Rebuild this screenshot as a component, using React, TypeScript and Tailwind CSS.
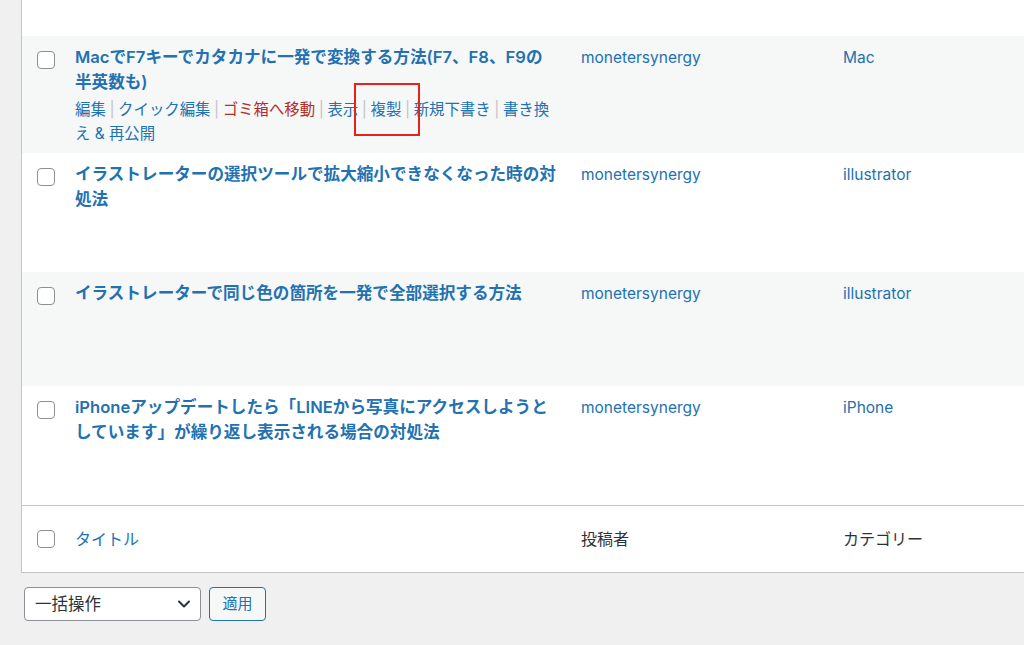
import React from 'react';

const font = "font-['Inter','Noto_Sans_CJK_JP',sans-serif]";

type Row = {
  title: string[];
  category: string;
  height: string;
  striped: boolean;
  actions?: boolean;
};

const rows: Row[] = [
  {
    title: ['MacでF7キーでカタカナに一発で変換する方法(F7、F8、F9の', '半英数も)'],
    category: 'Mac',
    height: 'h-[117px]',
    striped: true,
    actions: true,
  },
  {
    title: ['イラストレーターの選択ツールで拡大縮小できなくなった時の対', '処法'],
    category: 'illustrator',
    height: 'h-[119px]',
    striped: false,
  },
  {
    title: ['イラストレーターで同じ色の箇所を一発で全部選択する方法'],
    category: 'illustrator',
    height: 'h-[114px]',
    striped: true,
  },
  {
    title: ['iPhoneアップデートしたら「LINEから写真にアクセスしようと', 'しています」が繰り返し表示される場合の対処法'],
    category: 'iPhone',
    height: 'h-[119px]',
    striped: false,
  },
];

const Checkbox: React.FC = () => (
  <span className="block h-[18px] w-[18px] rounded-[4px] border border-[#8c8f94] bg-white" />
);

const Sep: React.FC = () => <span className="mx-[3.6px] text-[#c3c4c7]">|</span>;

const RowActions: React.FC = () => (
  <div className="mt-[3px] whitespace-nowrap text-[15.4px] leading-[24px] text-[#2271b1]">
    <a>編集</a>
    <Sep />
    <a>クイック編集</a>
    <Sep />
    <a className="text-[#b32d2e]">ゴミ箱へ移動</a>
    <Sep />
    <a>表示</a>
    <Sep />
    <a>複製</a>
    <Sep />
    <a>新規下書き</a>
    <Sep />
    <a>書き換</a>
    <br />
    <a>え &amp; 再公開</a>
  </div>
);

export default function App() {
  return (
    <div className={`relative min-h-screen bg-[#f0f0f1] pl-[21px] ${font}`}>
      {/* posts table */}
      <div className="border-b border-l border-[#c3c4c7] bg-white">
        <div className="h-[36px] bg-white" />
        {rows.map((row, i) => (
          <div key={i} className={`flex ${row.height} ${row.striped ? 'bg-[#f6f7f7]' : 'bg-white'}`}>
            <div className="w-[41px] shrink-0 pl-[15px] pt-[15px]">
              <Checkbox />
            </div>
            <div className="w-[506px] shrink-0 px-3 pt-[9px]">
              <a className="block whitespace-nowrap text-[16.6px] font-semibold leading-[25px] text-[#2271b1]">
                {row.title.map((line, j) => (
                  <React.Fragment key={j}>
                    {j > 0 && <br />}
                    {line}
                  </React.Fragment>
                ))}
              </a>
              {row.actions && <RowActions />}
            </div>
            <div className="w-[262px] shrink-0 px-3 pt-[9px] text-[15.5px] leading-[25px] text-[#2271b1]">
              <a>monetersynergy</a>
            </div>
            <div className="flex-1 px-3 pt-[9px] text-[15.5px] leading-[25px] text-[#2271b1]">
              <a>{row.category}</a>
            </div>
          </div>
        ))}

        {/* table footer */}
        <div className="flex h-[67px] items-center border-t border-[#c3c4c7] text-[16px]">
          <div className="w-[41px] shrink-0 pl-[15px]">
            <Checkbox />
          </div>
          <div className="w-[506px] shrink-0 px-3 text-[#2271b1]">タイトル</div>
          <div className="w-[262px] shrink-0 px-3 text-[#2c3338]">投稿者</div>
          <div className="flex-1 px-3 text-[#2c3338]">カテゴリー</div>
        </div>
      </div>

      {/* bulk actions */}
      <div className="mt-[14px] flex items-center gap-[8px] pl-[3px]">
        <div className="flex h-[34px] w-[177px] items-center justify-between rounded-[4px] border border-[#8c8f94] bg-white pl-[10px] pr-[8px] text-[16.5px] text-[#2c3338]">
          <span>一括操作</span>
          <svg width="16" height="16" viewBox="0 0 16 16" fill="none">
            <path d="M3 5.5l5 5 5-5" stroke="#2c3338" strokeWidth="2" strokeLinecap="round" strokeLinejoin="round" />
          </svg>
        </div>
        <button className="flex h-[34px] w-[57px] items-center justify-center rounded-[4px] border border-[#2271b1] bg-[#f6f7f7] text-[15px] text-[#2271b1]">
          適用
        </button>
      </div>

      {/* annotation highlight */}
      <div className="absolute left-[354px] top-[83px] h-[53px] w-[66px] border-2 border-[#e5231b]" />
    </div>
  );
}
